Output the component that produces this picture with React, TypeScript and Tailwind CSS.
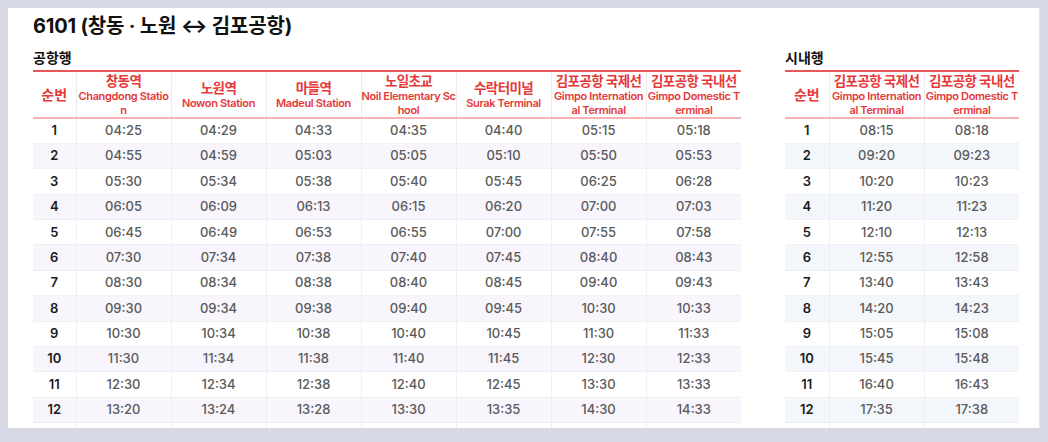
import React from 'react';

interface Station {
  ko: string;
  en: string[]; // lines, split as the header wraps them
}

const toAirport: Station[] = [
  { ko: '창동역', en: ['Changdong Statio', 'n'] },
  { ko: '노원역', en: ['Nowon Station'] },
  { ko: '마들역', en: ['Madeul Station'] },
  { ko: '노일초교', en: ['Noil Elementary Sc', 'hool'] },
  { ko: '수락터미널', en: ['Surak Terminal'] },
  { ko: '김포공항 국제선', en: ['Gimpo Internation', 'al Terminal'] },
  { ko: '김포공항 국내선', en: ['Gimpo Domestic T', 'erminal'] },
];

const toCity: Station[] = [
  { ko: '김포공항 국제선', en: ['Gimpo Internation', 'al Terminal'] },
  { ko: '김포공항 국내선', en: ['Gimpo Domestic T', 'erminal'] },
];

const airportRows: string[][] = [
  ['04:25', '04:29', '04:33', '04:35', '04:40', '05:15', '05:18'],
  ['04:55', '04:59', '05:03', '05:05', '05:10', '05:50', '05:53'],
  ['05:30', '05:34', '05:38', '05:40', '05:45', '06:25', '06:28'],
  ['06:05', '06:09', '06:13', '06:15', '06:20', '07:00', '07:03'],
  ['06:45', '06:49', '06:53', '06:55', '07:00', '07:55', '07:58'],
  ['07:30', '07:34', '07:38', '07:40', '07:45', '08:40', '08:43'],
  ['08:30', '08:34', '08:38', '08:40', '08:45', '09:40', '09:43'],
  ['09:30', '09:34', '09:38', '09:40', '09:45', '10:30', '10:33'],
  ['10:30', '10:34', '10:38', '10:40', '10:45', '11:30', '11:33'],
  ['11:30', '11:34', '11:38', '11:40', '11:45', '12:30', '12:33'],
  ['12:30', '12:34', '12:38', '12:40', '12:45', '13:30', '13:33'],
  ['13:20', '13:24', '13:28', '13:30', '13:35', '14:30', '14:33'],
];

const cityRows: string[][] = [
  ['08:15', '08:18'],
  ['09:20', '09:23'],
  ['10:20', '10:23'],
  ['11:20', '11:23'],
  ['12:10', '12:13'],
  ['12:55', '12:58'],
  ['13:40', '13:43'],
  ['14:20', '14:23'],
  ['15:05', '15:08'],
  ['15:45', '15:48'],
  ['16:40', '16:43'],
  ['17:35', '17:38'],
];

function Timetable({
  title,
  stations,
  rows,
  stripe,
  numWidth,
}: {
  title: string;
  stations: Station[];
  rows: string[][];
  stripe: string;
  numWidth: string;
}) {
  return (
    <div className="flex flex-col">
      <h2 className="text-[14px] leading-[20px] font-bold text-[#111] mb-[2px]">{title}</h2>
      <table className="table-fixed border-collapse">
        <colgroup>
          <col className={numWidth} />
          {stations.map((s, i) => (
            <col key={i} className="w-[95px]" />
          ))}
        </colgroup>
        <thead>
          <tr className="h-[47px]">
            <th className="border-t-2 border-b-2 border-t-[#e8575a] border-b-[#f6b3b3] text-[14px] font-semibold text-[#e5393a] align-middle leading-[18px]">
              순번
            </th>
            {stations.map((s, i) => (
              <th
                key={i}
                className="border-t-2 border-b-2 border-l border-t-[#e8575a] border-b-[#f6b3b3] border-l-[#ececec] p-0 align-middle text-center font-semibold text-[#e5393a]"
              >
                <div className="text-[13.5px] leading-[16px] tracking-[-0.6px] whitespace-nowrap">{s.ko}</div>
                {s.en.map((line, k) => (
                  <div key={k} className="text-[11px] leading-[14px] tracking-[-0.35px] whitespace-nowrap">
                    {line}
                  </div>
                ))}
              </th>
            ))}
          </tr>
        </thead>
        <tbody>
          {rows.map((r, i) => (
            <tr key={i} className={`h-[25.4px] border-b border-[#f0f0f3] ${i % 2 === 1 ? stripe : 'bg-white'}`}>
              <td className="text-center text-[13px] font-semibold text-[#1a1a1a]">{i + 1}</td>
              {r.map((t, j) => (
                <td key={j} className="border-l border-[#efeff2] text-center text-[13px] font-medium text-[#5a5a5a]">
                  {t}
                </td>
              ))}
            </tr>
          ))}
          {/* next row, cut off by the card's bottom edge */}
          <tr className="h-[25.4px] bg-white">
            <td />
            {stations.map((s, j) => (
              <td key={j} className="border-l border-[#efeff2]" />
            ))}
          </tr>
        </tbody>
      </table>
    </div>
  );
}

export default function App() {
  return (
    <main
      className="w-[1048px] h-[442px] bg-[#d6d9e4] p-[8px] pb-[14px]"
      style={{ fontFamily: 'Inter, "Noto Sans CJK KR", sans-serif' }}
    >
      <div className="h-full bg-white border-r border-[#e6e8ee] overflow-hidden pl-[25px] pr-[17px] pt-[4px]">
        <h1 className="text-[20px] leading-[28px] font-bold text-[#111] tracking-[-0.2px] mb-[8px]">
          6101 (창동 · 노원 ↔ 김포공항)
        </h1>
        <div className="flex gap-[44px]">
          <Timetable
            title="공항행"
            stations={toAirport}
            rows={airportRows}
            stripe="bg-[#f8f5fd]"
            numWidth="w-[43px]"
          />
          <Timetable
            title="시내행"
            stations={toCity}
            rows={cityRows}
            stripe="bg-[#f3f6fb]"
            numWidth="w-[44px]"
          />
        </div>
      </div>
    </main>
  );
}
